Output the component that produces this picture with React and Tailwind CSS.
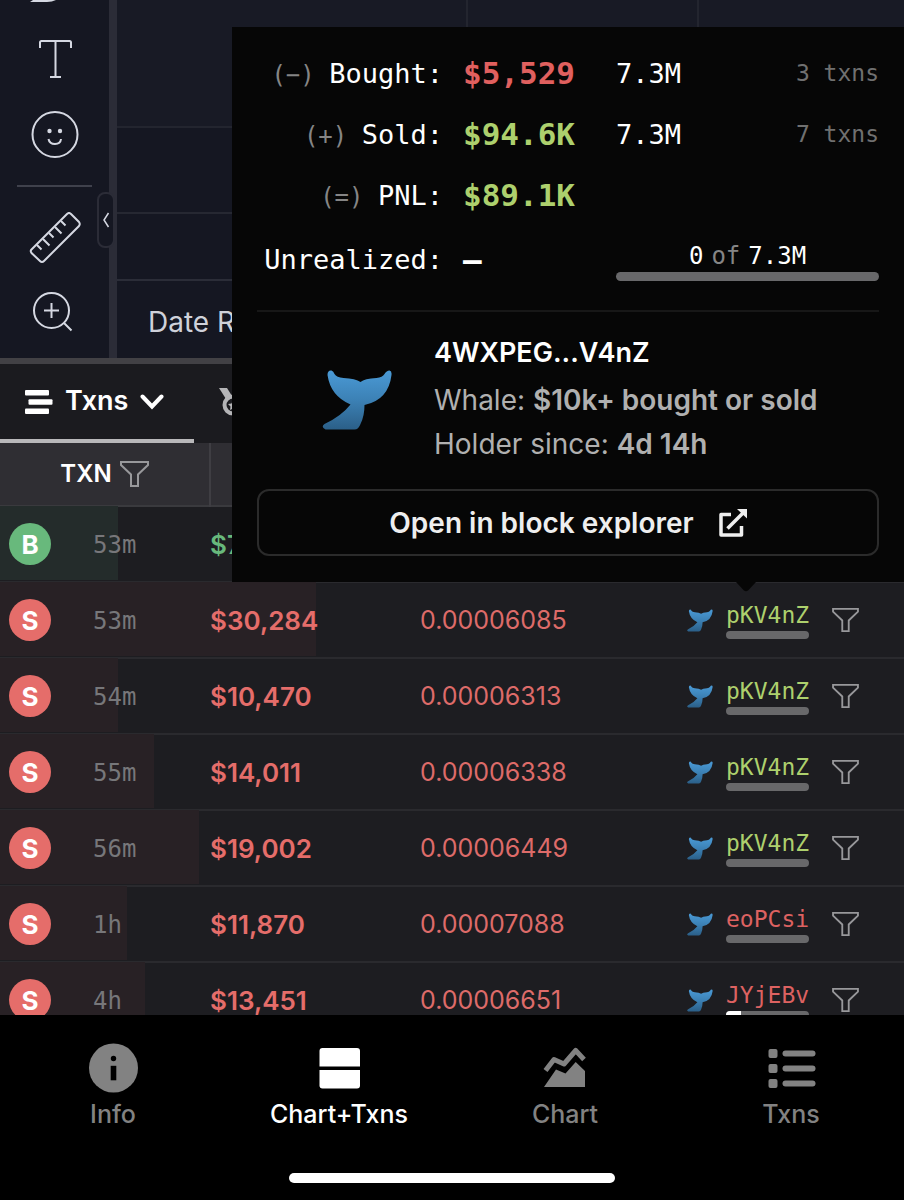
const MONO = "font-['DejaVu_Sans_Mono',monospace]";

const trades = [
  { side: 'B', age: '53m', amount: '$7', size: 13 },
  { side: 'S', age: '53m', amount: '$30,284', price: '0.00006085', trader: 'pKV4nZ', won: true, size: 35, held: 0 },
  { side: 'S', age: '54m', amount: '$10,470', price: '0.00006313', trader: 'pKV4nZ', won: true, size: 13, held: 0 },
  { side: 'S', age: '55m', amount: '$14,011', price: '0.00006338', trader: 'pKV4nZ', won: true, size: 17, held: 0 },
  { side: 'S', age: '56m', amount: '$19,002', price: '0.00006449', trader: 'pKV4nZ', won: true, size: 22, held: 0 },
  { side: 'S', age: '1h', amount: '$11,870', price: '0.00007088', trader: 'eoPCsi', won: false, size: 14, held: 0 },
  { side: 'S', age: '4h', amount: '$13,451', price: '0.00006651', trader: 'JYjEBv', won: false, size: 16, held: 18 },
];

const Whale = ({ className }) => (
  <svg viewBox="0 0 72 62" className={className} aria-hidden="true">
    <defs>
      <linearGradient id="whale" x1="0" y1="0" x2="0" y2="1">
        <stop offset="0" stopColor="#4a9ad6" />
        <stop offset="0.5" stopColor="#3c81b5" />
        <stop offset="1" stopColor="#2b5f88" />
      </linearGradient>
    </defs>
    <path
      fill="url(#whale)"
      d="M6 6Q6 1 10 1.5Q12 2 13 5Q15 8.5 22 9Q34 9.5 39 13Q43 9.5 55 9Q61 8.5 63 5Q65 1.5 68 1.5Q70.5 2 70 6Q67 31 43 36Q43 47 39 55Q37 60.5 33 60.5L4 60.5Q-1 58 3 55Q20 47 29 35.5Q9 27 6 6Z"
    />
  </svg>
);

const Funnel = ({ className }) => (
  <svg viewBox="0 0 29 26" className={className} fill="none" stroke="currentColor" strokeWidth="2" aria-hidden="true">
    <path d="M1 1H28V4L18 13.500V25H11V13.500L1 4Z" />
  </svg>
);

const ToolButton = ({ label, children }) => (
  <button type="button" aria-label={label} className="flex h-[75px] w-full items-center justify-center">
    <svg viewBox="0 0 52 52" className="size-[52px]" fill="none" stroke="currentColor" strokeWidth="2" aria-hidden="true">
      {children}
    </svg>
  </button>
);

const Toolbar = () => (
  <div className="relative w-[117px] shrink-0 border-r-8 border-[#2b2c37] text-[#d5d8e2]">
    <button type="button" aria-label="Brush" className="flex h-[22px] w-full items-start pl-[29px]">
      <svg viewBox="0 0 28 3" className="h-[3px] w-7" fill="currentColor" aria-hidden="true">
        <path d="M4 0H27Q23 2 18 2H1Z" />
      </svg>
    </button>
    <ToolButton label="Text">
      <path d="M11 14V8.500Q11 7 12.500 7H40.500Q42 7 42 8.500V14M26.500 7V43M21 43H32" />
    </ToolButton>
    <ToolButton label="Emoji">
      <circle cx="26" cy="25.500" r="22.500" />
      <circle cx="20.500" cy="22" r="2.200" fill="currentColor" stroke="none" />
      <circle cx="31" cy="22" r="2.200" fill="currentColor" stroke="none" />
      <path d="M19.500 30Q20.500 35 26 35T32 30" />
    </ToolButton>
    <hr className="mx-[17px] my-[13px] border-t-2 border-[#3f414c]" />
    <ToolButton label="Measure">
      <path d="M2.500 37.500L38 2Q40 0 42 2L50 10Q51.500 12 50 14L15 49Q13 51 11 49L2.500 41Q1 39 2.500 37.500Z" />
      <path d="M8 33L12.500 37.500M14 27L20.500 33.500M20 21L24.500 25.500M26 15L32.500 21.500M32 9L36.500 13.500" />
    </ToolButton>
    <ToolButton label="Zoom in">
      <circle cx="22.500" cy="23.500" r="17.500" />
      <path d="M15 23.500H30M22.500 16V31M35 36L42.500 43.500" />
    </ToolButton>
    <button
      type="button"
      aria-label="Collapse toolbar"
      className="absolute top-48 -right-1.5 flex h-14 w-[18px] items-center justify-center rounded-lg border-2 border-[#2b2c37] bg-[#151722]"
    >
      <svg viewBox="0 0 8 16" className="h-4 w-2" fill="none" stroke="currentColor" strokeWidth="1.5" aria-hidden="true">
        <path d="M6.500 1L2 8L6.500 15" />
      </svg>
    </button>
  </div>
);

const Chart = () => (
  <section className="flex h-[358px] shrink-0 bg-[#151722]">
    <Toolbar />
    <div className="min-w-0 flex-1">
      <div className="flex h-32 border-b-2 border-[#23252f] bg-[#181a25]">
        <div className="w-[351px] border-r-2 border-[#23252f]" />
        <div className="w-[231px] border-r-2 border-[#23252f]" />
      </div>
      <div className="h-[86px] border-b-2 border-[#262832]" />
      <div className="h-[67px] border-b-2 border-[#2b2d38]" />
      <button type="button" className="h-[77px] px-[31px] pt-1 text-[28px] text-[#cfd1da]">Date Range</button>
    </div>
  </section>
);

const Tabs = () => (
  <div className="flex h-[85px] shrink-0 border-t-6 border-[#424145] bg-[#1b1b1f]">
    <button type="button" className="flex w-[194px] items-center gap-3 border-b-4 border-[#b9b8ba] pl-[25px] text-[27px] font-semibold text-white">
      <svg viewBox="0 0 28 26" className="h-[26px] w-7 shrink-0" fill="currentColor" aria-hidden="true">
        <rect x="0" y="1" width="24" height="5.500" rx="1" />
        <rect x="3.500" y="10.300" width="24" height="5.500" rx="1" />
        <rect x="0" y="19.600" width="24" height="5.500" rx="1" />
      </svg>
      Txns
      <svg viewBox="0 0 24 16" className="h-4 w-6 shrink-0" fill="none" stroke="currentColor" strokeWidth="4" strokeLinecap="round" aria-hidden="true">
        <path d="M2.500 2.500L12 12.500L21.500 2.500" />
      </svg>
    </button>
    <button type="button" aria-label="Top traders" className="pb-1 pl-[25px] text-[#b5b5b7]">
      <svg viewBox="0 0 28 28" className="size-7" aria-hidden="true">
        <path d="M0 0H8L13 8L7 11Z" fill="currentColor" />
        <circle cx="14" cy="17" r="8.500" fill="none" stroke="currentColor" strokeWidth="4" />
        <path d="M14 12L15.500 15.500L19 16L16.500 18.500L17 22L14 20.500L11 22L11.500 18.500L9 16L12.500 15.500Z" fill="currentColor" />
      </svg>
    </button>
  </div>
);

const TradeRow = ({ side, age, amount, price, trader, won, size, held }) => {
  const buy = side === 'B';
  return (
    <tr className="relative h-[76px] border-b-2 border-[#2a2a2e]">
      <td className="pl-[9px]">
        <div
          className={buy ? 'absolute inset-y-0 left-0 bg-[#242c2b]' : 'absolute inset-y-0 left-0 bg-[#282125]'}
          style={{ width: `${size}%` }}
        />
        <div className="relative flex items-center">
          <span className={`flex size-[42px] items-center justify-center rounded-full text-[26px] font-bold text-white ${buy ? 'bg-[#68b97c]' : 'bg-[#e56d6a]'}`}>
            {side}
          </span>
          <span className={`${MONO} ml-[42px] pt-0.5 text-2xl text-[#77777a]`}>{age}</span>
        </div>
      </td>
      <td className={`relative text-[26px] font-semibold ${buy ? 'text-[#68b97c]' : 'text-[#e56d6a]'}`}>{amount}</td>
      <td className="relative pt-0.5 text-[25px] text-[#dd6b69]">{price}</td>
      <td className="relative">
        {trader && (
          <div className="flex items-center">
            <Whale className="mr-3 h-[23px] w-7" />
            <a href="#" className={`${MONO} flex w-[83px] flex-col text-[23px] leading-7 ${won ? 'text-[#add06d]' : 'text-[#dd6261]'}`}>
              {trader}
              <span className="mt-0.5 h-2 overflow-hidden rounded-full bg-[#68686a]">
                <span className="block h-full bg-white" style={{ width: `${held}%` }} />
              </span>
            </a>
            <button type="button" aria-label={`Filter by ${trader}`} className="ml-[23px] text-[#98989b]">
              <Funnel className="block h-6 w-[27px]" />
            </button>
          </div>
        )}
      </td>
    </tr>
  );
};

const TradeTable = () => (
  <div className="min-h-0 flex-1 overflow-hidden bg-[#1d1d21]">
    <table className="w-full table-fixed text-left">
      <thead>
        <tr className="h-[63px] border-b-2 border-[#3a3a3e] bg-[#2f2e33] text-2xl text-white">
          <th className="w-[210px] border-r-2 border-[#3f3e43] font-semibold">
            <div className="flex items-center justify-center gap-2">
              TXN
              <button type="button" aria-label="Filter by type" className="text-[#98989b]">
                <Funnel className="block h-[26px] w-[29px]" />
              </button>
            </div>
          </th>
          <th className="w-[210px]" aria-label="USD" />
          <th aria-label="Price" />
          <th className="w-[218px]" aria-label="Trader" />
        </tr>
      </thead>
      <tbody>
        {trades.map((trade, i) => (
          <TradeRow key={i} {...trade} />
        ))}
      </tbody>
    </table>
  </div>
);

const StatRow = ({ sign, label, value, color, amount, txns }) => (
  <>
    <dt className="text-right text-[27px] text-white">
      {sign && <span className="text-2xl text-[#858585]">{sign} </span>}
      {label}
    </dt>
    <dd className={`text-[31px] font-bold ${color}`}>{value}</dd>
    <dd className="flex items-center justify-between text-[27px] text-white">
      <span>{amount}</span>
      <span className="text-[23px] text-[#707070]">{txns}</span>
    </dd>
  </>
);

const TraderPopover = () => (
  <div className="absolute top-[27px] right-0 left-[232px] bg-[#060606] px-[25px] pt-4 pb-[26px]">
    <dl className={`${MONO} grid grid-cols-[186px_133px_1fr] items-center gap-x-5 leading-[61px]`}>
      <StatRow sign="(−)" label="Bought:" value="$5,529" color="text-[#e0605f]" amount="7.3M" txns="3 txns" />
      <StatRow sign="(+)" label="Sold:" value="$94.6K" color="text-[#add06d]" amount="7.3M" txns="7 txns" />
      <StatRow sign="(=)" label="PNL:" value="$89.1K" color="text-[#add06d]" />
      <dt className="text-right text-[27px] leading-[68px] text-white">Unrealized:</dt>
      <dd className="text-[31px] leading-[68px] font-bold text-white">–</dd>
      <dd className="text-center text-2xl leading-8 text-white">
        <div className="flex justify-center gap-2">
          <span>0</span>
          <span className="text-[#858585]">of</span>
          <span>7.3M</span>
        </div>
        <div className="h-[9px] rounded-full bg-[#68686a]" />
      </dd>
    </dl>
    <div className="mt-4 flex items-center border-t-2 border-[#171717] pt-[19px]">
      <Whale className="mt-0.5 mr-10 ml-16 h-[62px] w-[73px] shrink-0" />
      <div className="text-[28px] leading-11 whitespace-nowrap text-[#b0b0b0]">
        <div className="mb-[3px] text-[27px] font-semibold text-white">4WXPEG...V4nZ</div>
        <div>Whale: <b className="font-semibold">$10k+ bought or sold</b></div>
        <div>Holder since: <b className="font-semibold">4d 14h</b></div>
      </div>
    </div>
    <a href="#" className="mt-[23px] flex h-[67px] items-center justify-center gap-[25px] rounded-xl border-2 border-[#2b2b2b] text-[28px] font-semibold text-[#eeeeee]">
      Open in block explorer
      <svg viewBox="0 0 28 28" className="size-7" fill="none" stroke="currentColor" strokeWidth="3.500" aria-hidden="true">
        <path d="M12 5.500H2V26H22.500V17" strokeLinejoin="round" />
        <path d="M8.500 19.500L24 4" />
        <path d="M18 0H28V9.500Z" fill="currentColor" stroke="none" />
      </svg>
    </a>
    <svg viewBox="0 0 20 10" className="absolute top-full right-[148px] h-[10px] w-5 fill-[#060606]" aria-hidden="true">
      <path d="M0 0H20L12 8.500Q10 10 8 8.500Z" />
    </svg>
  </div>
);

const NavItem = ({ label, active, children }) => (
  <button type="button" className={`flex flex-col items-center gap-1.5 text-[25px] leading-8 font-medium ${active ? 'text-white' : 'text-[#828282]'}`}>
    <svg viewBox="0 0 48 48" className="size-12 overflow-visible" fill="currentColor" aria-hidden="true">
      {children}
    </svg>
    {label}
  </button>
);

const BottomNav = () => (
  <nav className="shrink-0 bg-black pt-[29px] pb-[17px]">
    <div className="grid grid-cols-4">
      <NavItem label="Info">
        <circle cx="24.500" cy="24" r="24.500" />
        <circle cx="24.500" cy="14.500" r="2.700" fill="#000" />
        <rect x="21.700" y="21.800" width="5.600" height="14.500" fill="#000" />
      </NavItem>
      <NavItem label="Chart+Txns" active>
        <path d="M7.500 4H42Q45 4 45 7V22.500H4.500V7Q4.500 4 7.500 4Z" />
        <path d="M4.500 26H45V41.500Q45 44.500 42 44.500H7.500Q4.500 44.500 4.500 41.500Z" />
      </NavItem>
      <NavItem label="Chart">
        <path d="M4.500 26.500L13 15.500L23 20L34.700 6.500L43 15.500" fill="none" stroke="currentColor" strokeWidth="5" strokeLinejoin="round" />
        <path d="M3 43L15 25.500L24.500 29.500L34.700 18L44 27V43Z" />
      </NavItem>
      <NavItem label="Txns">
        {[5, 20, 35].map((y) => (
          <g key={y}>
            <rect x="1.500" y={y} width="9" height="9" rx="2" />
            <rect x="15.500" y={y + 1.5} width="33" height="6" rx="3" />
          </g>
        ))}
      </NavItem>
    </div>
    <div className="mx-auto mt-[43px] h-2.5 w-[36%] rounded-full bg-white" />
  </nav>
);

const App = () => (
  <div className="relative flex h-screen flex-col overflow-hidden bg-black font-['Inter',sans-serif]">
    <Chart />
    <Tabs />
    <TradeTable />
    <BottomNav />
    <TraderPopover />
  </div>
);

export default App;
